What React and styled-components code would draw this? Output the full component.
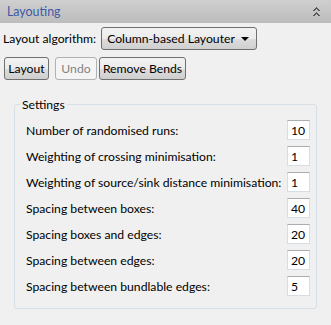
import React from "react";
import styled, { createGlobalStyle } from "styled-components";

const Global = createGlobalStyle`
  html, body { margin: 0; padding: 0; }
  body {
    width: 331px; height: 325px; overflow: hidden;
    background: #f0f0f0;
    font-family: Lato, "Noto Sans", sans-serif;
    font-size: 12.2px; color: #000;
  }
`;

const Panel = styled.div`
  width: 331px; height: 325px; display: flex; flex-direction: column;
  background: #f0f0f0;
`;

const Header = styled.div`
  height: 23px; box-sizing: border-box;
  display: flex; align-items: center; justify-content: space-between;
  padding: 0 10px 0 7px;
  background: linear-gradient(#cfcfcf, #bcbcbc);
  color: #3b5aa6; font-size: 12.4px;
`;

const Body = styled.div`
  display: flex; flex-direction: column; padding: 4px 3px 0 3px;
`;

const AlgoRow = styled.div`
  display: flex; align-items: center; gap: 5px; height: 23px; white-space: nowrap;
`;

const Select = styled.div`
  width: 156px; height: 23px; box-sizing: border-box;
  border: 1px solid #707070; border-radius: 3px;
  background: linear-gradient(#f2f2f2 0%, #ebebeb 50%, #dddddd 51%, #cfcfcf 100%);
  display: flex; align-items: center; justify-content: space-between;
  padding: 0 7px 0 5px;
`;

const Arrow = styled.span`
  width: 0; height: 0;
  border-left: 4px solid transparent; border-right: 4px solid transparent;
  border-top: 4px solid #000;
`;

const ButtonRow = styled.div`
  display: flex; gap: 2px; margin-top: 7px; padding-left: 1px;
`;

const Button = styled.div`
  height: 23px; box-sizing: border-box;
  width: ${(p) => p.w}px;
  display: flex; align-items: center; justify-content: center;
  border: 1px solid ${(p) => (p.disabled ? "#adb2b5" : "#707070")};
  border-radius: 3px; white-space: nowrap;
  color: ${(p) => (p.disabled ? "#838383" : "#000")};
  background: ${(p) =>
    p.disabled
      ? "#f4f4f4"
      : "linear-gradient(#f2f2f2 0%, #ebebeb 50%, #dddddd 51%, #cfcfcf 100%)"};
  margin-left: ${(p) => p.gap || 0}px;
`;

const Fieldset = styled.fieldset`
  margin: 17px 0 0 11px; width: 303px; min-width: 0; box-sizing: border-box;
  border: 1px solid #d5dfe5; border-radius: 3px;
  padding: 8px 6px 12px 11px;
  display: flex; flex-direction: column; gap: 6px;
`;

const Legend = styled.legend`
  padding: 0 2px; margin-left: -6px;
`;

const Row = styled.div`
  display: flex; align-items: center; justify-content: space-between; height: 20px;
  white-space: nowrap;
`;

const Input = styled.div`
  width: 23px; height: 20px; box-sizing: border-box; flex-shrink: 0;
  background: #fff; border: 1px solid #d6dde3; border-top-color: #abadb3;
  display: flex; align-items: center; padding-left: 3px;
`;

const Chevron = () => (
  <svg width="9" height="10" viewBox="0 0 9 10" shapeRendering="crispEdges">
    <path d="M4 0h1v1h1v1h1v1h1v1H6V3H5V2H4v1H3v1H1V3h1V2h1V1h1z" fill="#5a5a5a" />
    <path d="M4 5h1v1h1v1h1v1h1v1H6V8H5V7H4v1H3v1H1V8h1V7h1V6h1z" fill="#5a5a5a" />
  </svg>
);

const settings = [
  ["Number of randomised runs:", "10"],
  ["Weighting of crossing minimisation:", "1"],
  ["Weighting of source/sink distance minimisation:", "1"],
  ["Spacing between boxes:", "40"],
  ["Spacing boxes and edges:", "20"],
  ["Spacing between edges:", "20"],
  ["Spacing between bundlable edges:", "5"],
];

export default function App() {
  return (
    <>
      <Global />
      <Panel>
        <Header>
          <span>Layouting</span>
          <Chevron />
        </Header>
        <Body>
          <AlgoRow>
            <span>Layout algorithm:</span>
            <Select>
              <span>Column-based Layouter</span>
              <Arrow />
            </Select>
          </AlgoRow>
          <ButtonRow>
            <Button w={45}>Layout</Button>
            <Button w={42} disabled gap={4}>Undo</Button>
            <Button w={87}>Remove Bends</Button>
          </ButtonRow>
          <Fieldset>
            <Legend>Settings</Legend>
            {settings.map(([l, v]) => (
              <Row key={l}>
                <span>{l}</span>
                <Input>{v}</Input>
              </Row>
            ))}
          </Fieldset>
        </Body>
      </Panel>
    </>
  );
}
